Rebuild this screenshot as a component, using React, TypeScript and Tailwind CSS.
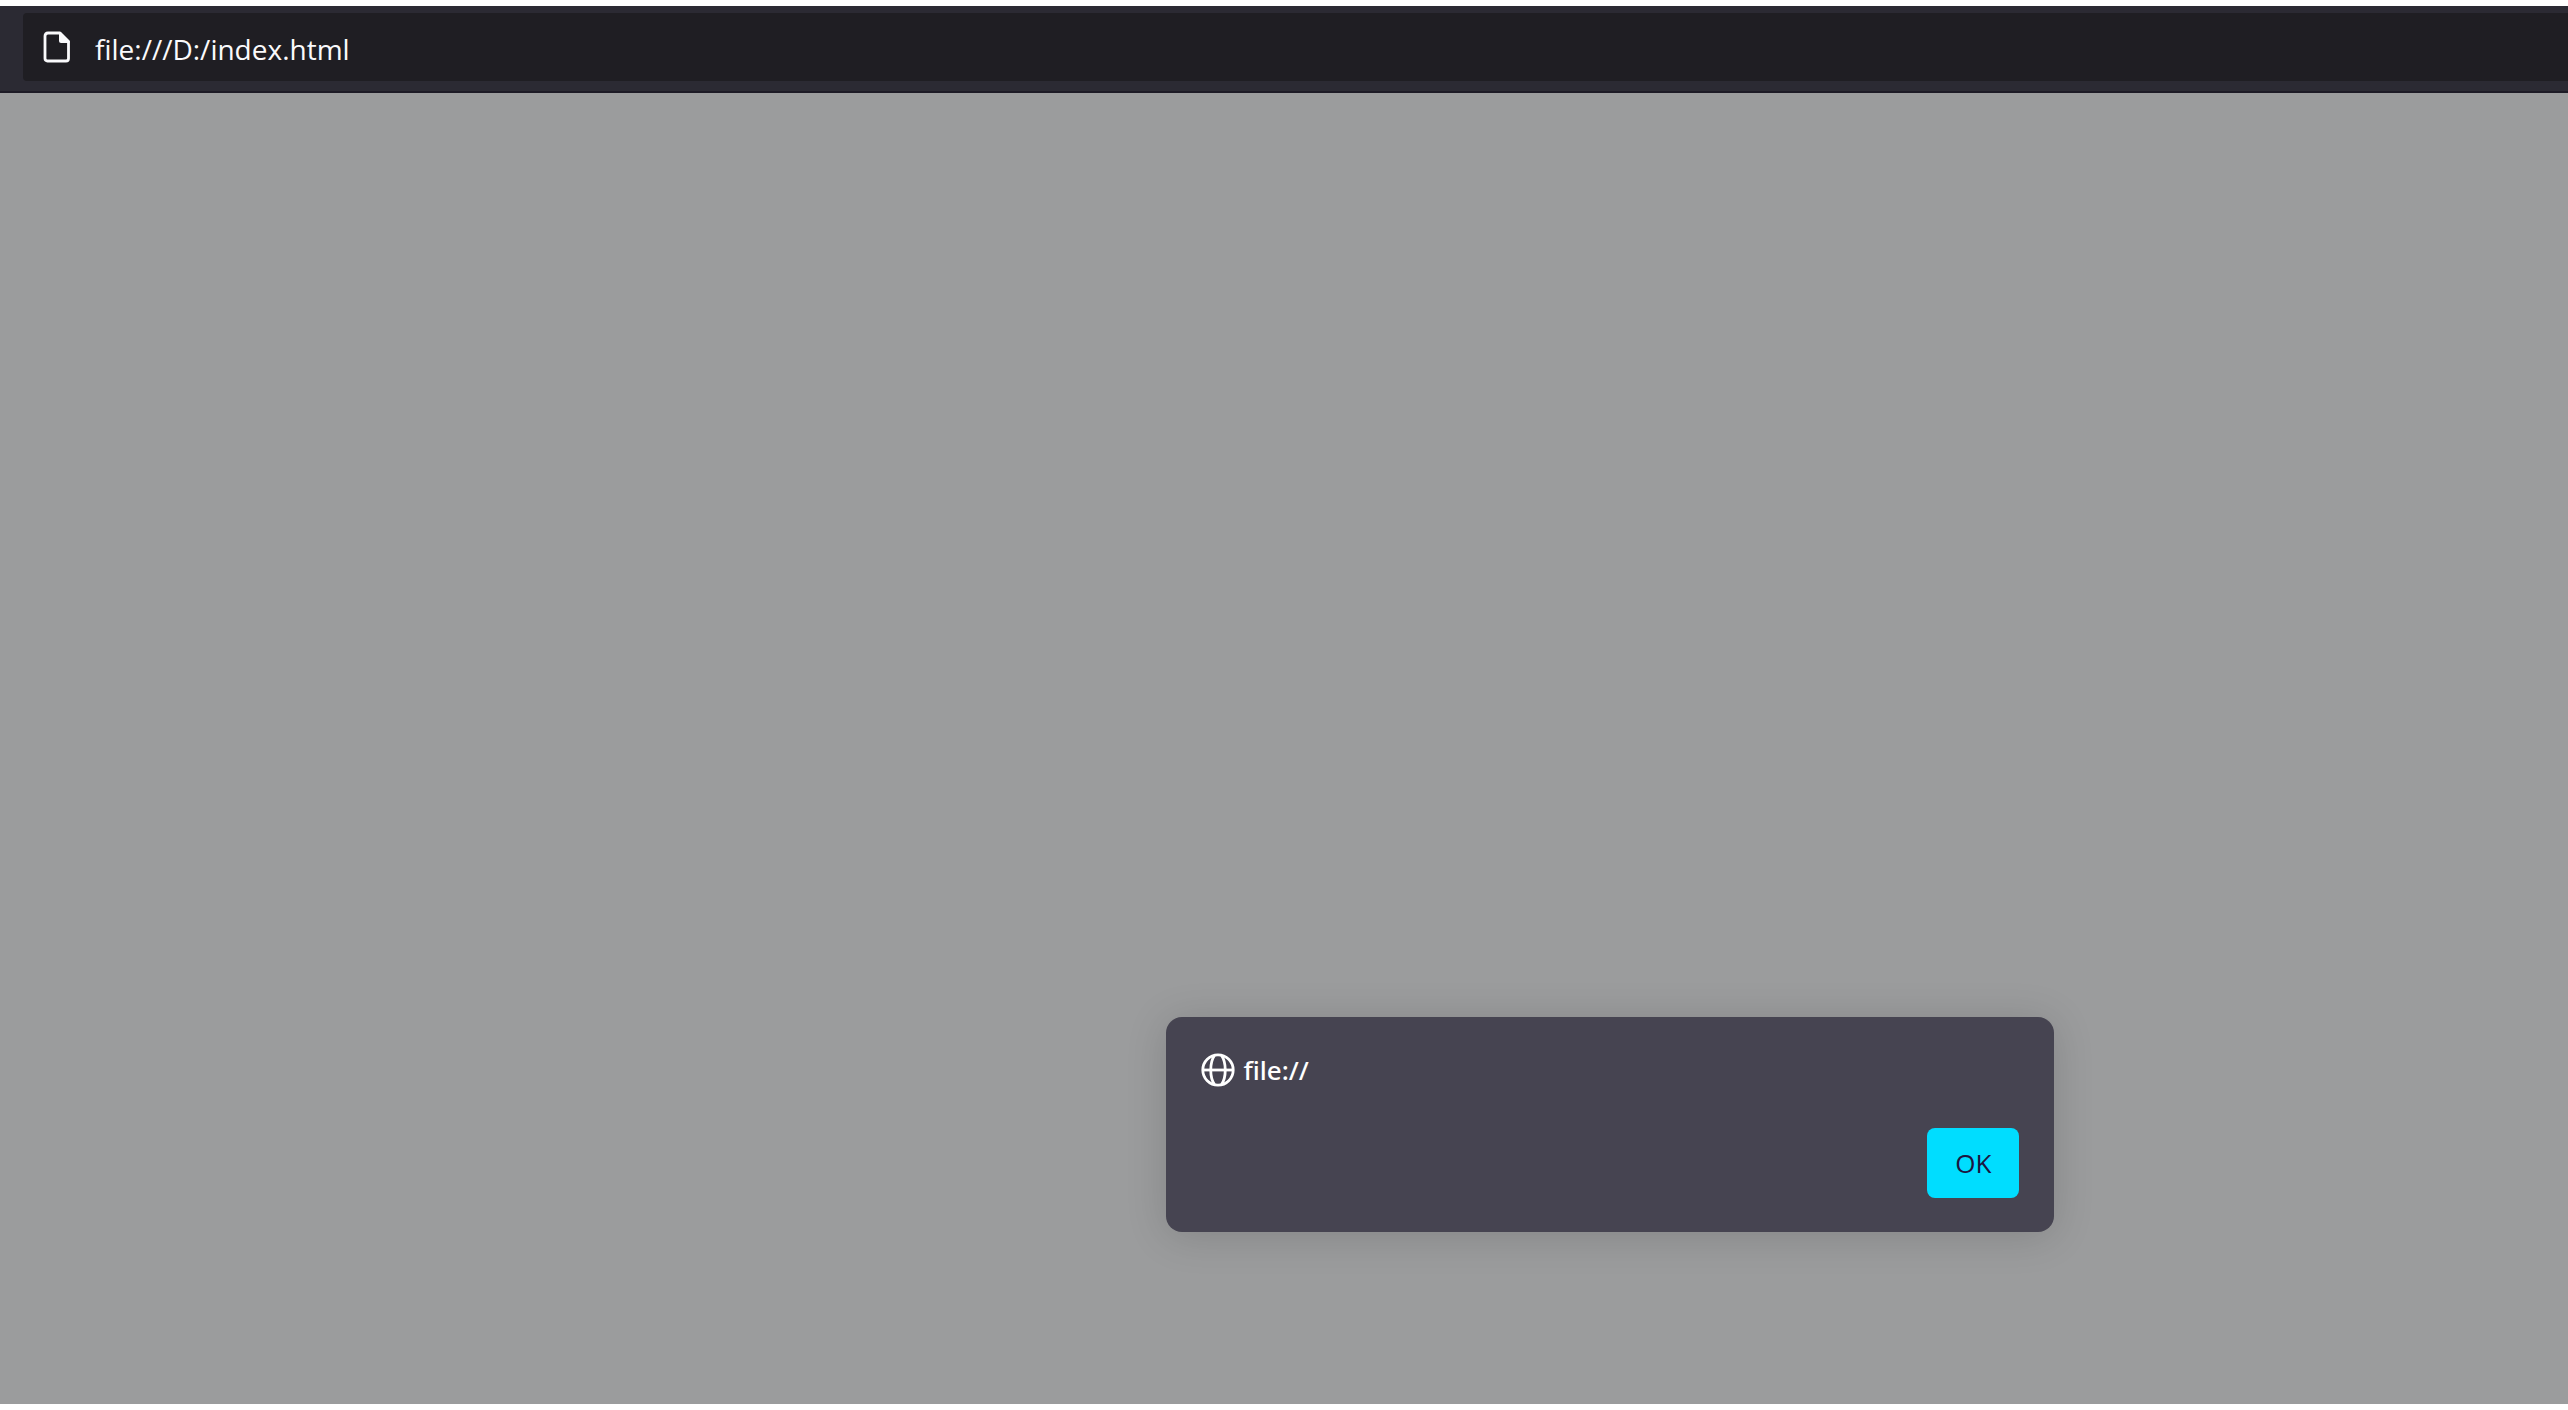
function PageIcon() {
  return (
    <svg aria-hidden="true" className="h-8 w-7 shrink-0" viewBox="0 0 28 32" fill="none">
      <path
        d="M5 2H17L25.500 10.500V27.500Q25.500 30 23 30H4.500Q2 30 2 27.500V5Q2 2 5 2Z"
        stroke="#fafafc"
        strokeWidth="2.800"
        strokeLinejoin="round"
      />
      <path d="M16 1.500H18L26.500 10V12H18Q16 12 16 10Z" fill="#fafafc" />
    </svg>
  );
}

function GlobeIcon() {
  return (
    <svg
      aria-hidden="true"
      className="size-[34px] shrink-0"
      viewBox="0 0 34 34"
      fill="none"
      stroke="#fff"
      strokeWidth="2.800"
    >
      <circle cx="17" cy="17" r="15.200" />
      <path d="M2 17H32" />
      <path d="M13.500 2.500C8.500 9.500 8.500 24.500 13.500 31.500" />
      <path d="M20.500 2.500C25.500 9.500 25.500 24.500 20.500 31.500" />
    </svg>
  );
}

export default function App() {
  return (
    <div className="flex min-h-screen flex-col bg-white py-1.5 font-['Open_Sans','Noto_Sans',sans-serif]">
      <header className="border-b-2 border-[#1d1b26] bg-[#2b2a33] pt-[7px] pb-2.5 pl-[23px]">
        <label className="flex h-[68px] items-center gap-6 rounded-l-sm bg-[#1f1e23] pl-5">
          <PageIcon />
          <input
            type="text"
            aria-label="Address"
            defaultValue="file:///D:/index.html"
            className="h-full min-w-0 flex-1 bg-transparent pt-1 text-[28px] text-[#fafafc] outline-none"
          />
        </label>
      </header>
      <main className="flex flex-1 items-end justify-end bg-[#9b9c9d] pr-[20%] pb-[172px]">
        <section
          role="dialog"
          aria-labelledby="dialog-origin"
          className="flex w-full max-w-[888px] flex-col rounded-2xl bg-[#464451] px-[35px] pt-9 pb-[34px] shadow-[0_4px_40px_rgba(0,0,0,0.15)]"
        >
          <div className="flex h-[34px] items-center gap-2 text-white">
            <GlobeIcon />
            <h1
              id="dialog-origin"
              className="font-['Noto_Sans','Open_Sans',sans-serif] text-[26px] font-medium"
            >
              file://
            </h1>
          </div>
          <button
            type="button"
            className="mt-[41px] h-[70px] w-[92px] self-end rounded-lg bg-[#00ddff] text-[26px] text-[#1c1440]"
          >
            OK
          </button>
        </section>
      </main>
    </div>
  );
}
